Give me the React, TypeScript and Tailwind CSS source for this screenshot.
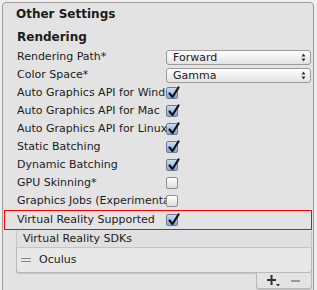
import React from 'react';

const font = { fontFamily: '"DejaVu Sans", Verdana, sans-serif' };

const rows = [
  { label: 'Auto Graphics API for Windows', checked: true },
  { label: 'Auto Graphics API for Mac', checked: true },
  { label: 'Auto Graphics API for Linux', checked: true },
  { label: 'Static Batching', checked: true },
  { label: 'Dynamic Batching', checked: true },
  { label: 'GPU Skinning*', checked: false },
  { label: 'Graphics Jobs (Experimental)', checked: false },
];

function Checkbox({ checked }: { checked: boolean }) {
  return (
    <div
      className={
        'relative w-[12px] h-[12px] rounded-[2px] border ' +
        (checked
          ? 'border-[#6b7c93] bg-gradient-to-b from-[#c9dcf3] to-[#7fa9dc]'
          : 'border-[#8e8e8e] bg-gradient-to-b from-[#ffffff] to-[#dcdcdc]')
      }
    >
      {checked && (
        <svg className="absolute left-[1px] top-[-2px]" width="12" height="13" viewBox="0 0 12 13">
          <path d="M1.5 7.5 L4.5 11 L10.5 1.5" fill="none" stroke="#111" strokeWidth="2.2" strokeLinecap="round" strokeLinejoin="round" />
        </svg>
      )}
    </div>
  );
}

function Dropdown({ value }: { value: string }) {
  return (
    <div className="flex items-center justify-between w-[145px] h-[15px] rounded-[3px] border border-[#9b9b9b] bg-gradient-to-b from-[#ffffff] to-[#e2e2e2] pl-[6px] pr-[4px] text-[11px] leading-none text-[#222]">
      <span>{value}</span>
      <svg width="5" height="9" viewBox="0 0 5 9">
        <path d="M2.5 0.5 L4.5 3.5 L0.5 3.5 Z M2.5 8.5 L4.5 5.5 L0.5 5.5 Z" fill="#333" />
      </svg>
    </div>
  );
}

export default function App() {
  return (
    <div className="w-[317px] h-[290px] bg-[#eeeeee] overflow-hidden pl-[2px] pt-[2px] text-[#1b1b1b]" style={font}>
      <div className="w-[312px] h-[300px] border border-[#9c9c9c] rounded-t-[4px] bg-[#e3e3e3]">
        <div className="h-[22px] flex items-center pl-[13px] text-[12px] font-bold">Other Settings</div>
        <div className="h-[23px] flex items-center pl-[14px] text-[12px] font-bold">Rendering</div>

        <div className="text-[11px]">
          <div className="h-[18px] flex items-center pl-[14px]">
            <div className="w-[149px] overflow-hidden whitespace-nowrap">Rendering Path*</div>
            <Dropdown value="Forward" />
          </div>
          <div className="h-[18px] flex items-center pl-[14px]">
            <div className="w-[149px] overflow-hidden whitespace-nowrap">Color Space*</div>
            <Dropdown value="Gamma" />
          </div>
          {rows.map(r => (
            <div key={r.label} className="h-[18px] flex items-center pl-[14px]">
              <div className="w-[149px] overflow-hidden whitespace-nowrap">{r.label}</div>
              <Checkbox checked={r.checked} />
            </div>
          ))}
          <div className="h-[20px] flex items-center mx-[1px] pl-[12px] border border-[#ff0000]">
            <div className="w-[149px] overflow-hidden whitespace-nowrap">Virtual Reality Supported</div>
            <Checkbox checked={true} />
          </div>

          <div className="ml-[13px] mr-[1px] mt-[1px]">
            <div className="h-[17px] flex items-center pl-[6px] border-x border-b border-[#c4c4c4] bg-[#e0e0e0]">
              Virtual Reality SDKs
            </div>
            <div className="h-[25px] flex items-center pl-[4px] border-x border-b border-[#b9b9b9] rounded-b-[3px] bg-[#e8e8e8] shadow-[0_1px_1px_rgba(0,0,0,0.15)]">
              <svg width="10" height="5" viewBox="0 0 10 5" className="mr-[8px]">
                <rect x="0" y="0" width="10" height="1" fill="#888" />
                <rect x="0" y="3" width="10" height="1" fill="#888" />
              </svg>
              <span>Oculus</span>
            </div>
            <div className="flex justify-end">
              <div className="w-[56px] h-[16px] flex items-center border-x border-b border-[#b9b9b9] rounded-b-[3px] bg-[#e3e3e3] shadow-[0_1px_1px_rgba(0,0,0,0.15)]">
                <svg width="14" height="12" viewBox="0 0 14 12" className="ml-[10px]">
                  <rect x="0" y="4" width="9" height="2" fill="#333" />
                  <rect x="3.5" y="0" width="2" height="10" fill="#333" />
                  <path d="M9 9 L13 9 L11 11.5 Z" fill="#333" />
                </svg>
                <svg width="9" height="2" viewBox="0 0 9 2" className="ml-[10px]">
                  <rect x="0" y="0" width="9" height="2" fill="#9a9a9a" />
                </svg>
              </div>
            </div>
          </div>
        </div>
      </div>
    </div>
  );
}
